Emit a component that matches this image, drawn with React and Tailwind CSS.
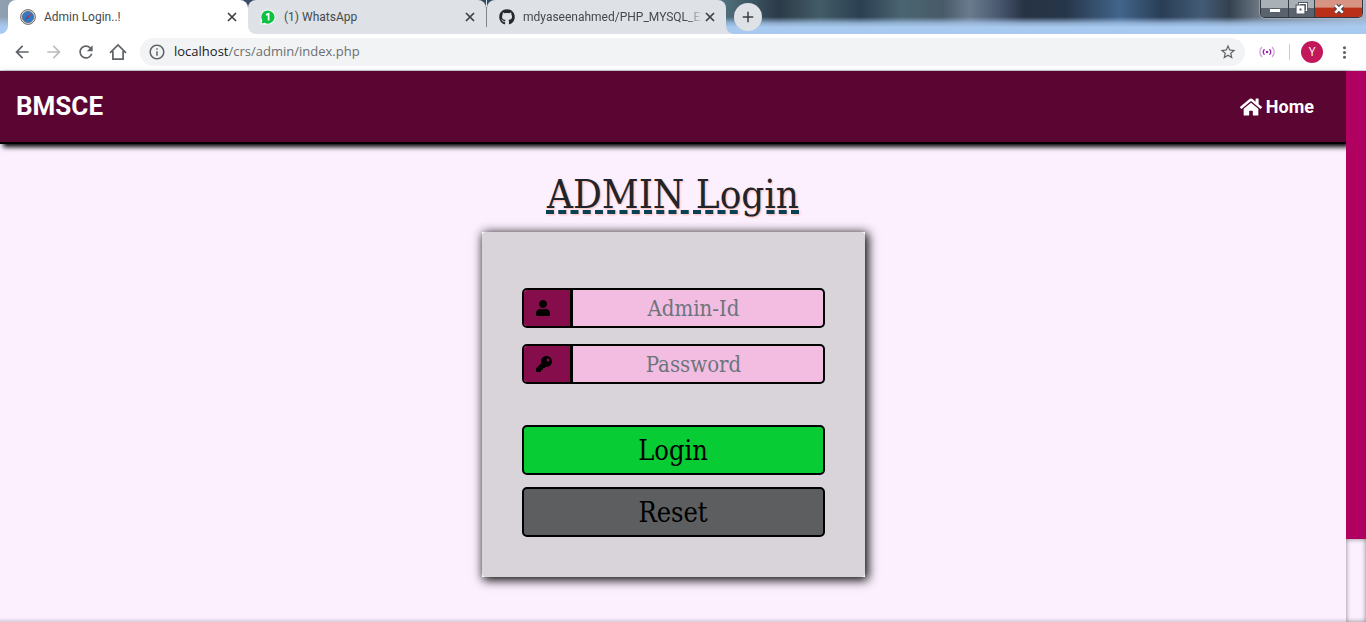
import React from "react";
import { FaUser, FaKey, FaHome, FaGithub } from "react-icons/fa";
import { MdArrowBack, MdArrowForward, MdRefresh, MdStarBorder, MdInfoOutline, MdAdd, MdMoreVert } from "react-icons/md";

function CompassIcon() {
  return (
    <svg viewBox="0 0 16 16" className="size-4 shrink-0" aria-hidden="true">
      <circle cx="8" cy="8" r="7.4" fill="#d9d9d9" stroke="#6a6a6a" strokeWidth="1" />
      <circle cx="8" cy="8" r="5.6" fill="#2f78cc" stroke="#5c6670" strokeWidth="0.8" />
      <path d="M11.5 4.5L8.8 8.8 7.2 7.2z" fill="#d8302c" />
      <path d="M4.5 11.5L7.2 7.2l1.6 1.6z" fill="#5b4a7a" />
    </svg>
  );
}

function ChatIcon() {
  return (
    <svg viewBox="0 0 16 16" className="size-4 shrink-0" aria-hidden="true">
      <path d="M8 .5A7.5 7.5 0 0 1 8 15.5H.7V8A7.4 7.4 0 0 1 8 .5z" fill="#fff" />
      <path d="M8 1.4a6.6 6.6 0 1 1-3.2 12.4L1.6 14.4l.7-3A6.6 6.6 0 0 1 8 1.4z" fill="#0bc142" />
      <path d="M6 5.9L8.6 4.8v6.6" fill="none" stroke="#fff" strokeWidth="1.7" />
    </svg>
  );
}

function Tab({ icon, title, active, width, fade }) {
  return (
    <div className={`flex h-[34px] min-w-0 items-center rounded-t-lg pr-[10px] pl-3 ${width} ${active ? "bg-white" : "bg-[#dee1e6]"}`}>
      {icon}
      <span className={`-mr-1 ml-2 min-w-0 flex-1 overflow-hidden font-['Roboto',sans-serif] text-xs whitespace-nowrap text-[#45494d] ${fade ? "[mask-image:linear-gradient(to_right,black_88%,transparent_97%)]" : ""}`}>{title}</span>
      <button aria-label="Close tab" className="flex size-3 shrink-0 items-center justify-center text-[#3c4043]">
        <svg viewBox="0 0 10 10" className="size-[10px]" fill="none" stroke="currentColor" strokeWidth="1.7"><path d="M1 1l8 8M9 1L1 9" /></svg>
      </button>
    </div>
  );
}

function WindowControls() {
  return (
    <div className="mr-[3px] ml-auto flex h-[18px] self-start overflow-hidden rounded-b-[5px] border border-t-0 border-[#30363f] shadow-[0_0_1px_1px_#c3ced980]">
      <button aria-label="Minimize" className="flex w-7 items-end justify-center border-r border-[#353d47] bg-linear-to-b from-[#a9b0b6] from-45% to-[#59626d] to-50% pb-1">
        <svg viewBox="0 0 12 5" className="h-[5px] w-3"><rect x=".5" y=".5" width="11" height="4" rx="1" fill="#fff" stroke="#555f69" /></svg>
      </button>
      <button aria-label="Restore" className="flex w-[26px] items-center justify-center border-r border-[#353d47] bg-linear-to-b from-[#a9b0b6] from-45% to-[#59626d] to-50%">
        <svg viewBox="0 0 13 13" className="size-[13px]">
          <path d="M4.5 1.5h7v7h-7z" fill="none" stroke="#505964" strokeWidth="3" />
          <path d="M4.5 1.5h7v7h-7z" fill="none" stroke="#fff" strokeWidth="1.2" />
          <path d="M2.5 4.5h6v6h-6z" fill="#505964" stroke="#505964" strokeWidth="4" />
          <path d="M2.5 4.5h6v6h-6z" fill="#fff" stroke="#fff" strokeWidth="1.8" />
          <path d="M4.5 6.5h2v2h-2z" fill="#505964" />
        </svg>
      </button>
      <button aria-label="Close" className="flex w-[47px] items-center justify-center bg-linear-to-b from-[#d89483] from-40% to-[#b92f17] to-50%">
        <svg viewBox="0 0 14 12" className="h-3 w-[14px]">
          <path d="M3.5 2.5l7 7m0-7l-7 7" stroke="#4c4654" strokeWidth="4.6" />
          <path d="M3.3 2.3l7.4 7.4m0-7.4L3.3 9.7" stroke="#fff" strokeWidth="2.5" />
        </svg>
      </button>
    </div>
  );
}

function TabStrip() {
  return (
    <div className="flex h-[34px] bg-[linear-gradient(to_bottom,transparent_50%,#a4c4eacc_68%,#a9caf0_80%),linear-gradient(to_right,#8fa0b0_0%,#3a4d68_18%,#354861_36%,#50707c_53%,#2b3a48_57%,#425c66_60%,#2b3f50_63%,#4b6572_66%,#475a67_69%,#6b7b8d_71%,#4b5a72_73%,#273343_75%,#26364a_78%,#42658b_82%,#293e56_85%,#445b76_88%,#33414f_90%,#67737f_92%,#a4b3c6_100%)]">
      <div className="flex w-2 shrink-0 items-end">
        <svg viewBox="0 0 8 8" className="size-2"><path d="M8 0v8H0a8 8 0 0 0 8-8z" fill="#fff" /></svg>
      </div>
      <Tab active width="w-[240px]" icon={<CompassIcon />} title="Admin Login..!" />
      <div className="relative">
        <svg viewBox="0 0 8 8" className="absolute bottom-0 left-0 z-10 size-2"><path d="M0 0v8h8a8 8 0 0 1-8-8z" fill="#fff" /></svg>
      </div>
      <Tab width="w-[238px]" icon={<ChatIcon />} title="(1) WhatsApp" />
      <div className="flex w-px items-center bg-[#dee1e6]"><div className="h-5 w-px bg-[#80868b]" /></div>
      <Tab fade width="w-[239px]" icon={<FaGithub className="size-4 shrink-0 text-[#24292e]" />} title="mdyaseenahmed/PHP_MYSQL_EX" />
      <div className="flex w-2 shrink-0 items-end">
        <svg viewBox="0 0 8 8" className="size-2"><path d="M0 0v8h8a8 8 0 0 1-8-8z" fill="#dee1e6" /></svg>
      </div>
      <button aria-label="New tab" className="flex size-7 items-center justify-center self-center rounded-full bg-[#dee1e6] text-[#3c4043]">
        <MdAdd className="size-[18px]" />
      </button>
      <WindowControls />
    </div>
  );
}

function Toolbar() {
  return (
    <div className="flex h-[37px] items-center border-b border-[#cfd2d6] bg-white pr-3 pl-3 text-[#5f6368]">
      <div className="flex items-center gap-3">
        <button aria-label="Back"><MdArrowBack className="size-5" /></button>
        <button aria-label="Forward" className="text-[#babcbe]"><MdArrowForward className="size-5" /></button>
        <button aria-label="Reload"><MdRefresh className="size-5" /></button>
        <button aria-label="Home page">
          <svg viewBox="0 0 20 20" className="size-5" fill="none" stroke="currentColor" strokeWidth="1.7"><path d="M2 10.9L10 3l8 7.9M4.9 9v8.1h10.2V9" /></svg>
        </button>
      </div>
      <div className="ml-3 flex h-7 flex-1 items-center rounded-full bg-[#f1f3f4] px-2">
        <MdInfoOutline className="size-[18px]" />
        <a href="#" className="ml-2 flex-1 text-[13px] text-[#6b6f73]"><span className="text-[#202124]">localhost</span>/crs/admin/index.php</a>
        <button aria-label="Bookmark this page"><MdStarBorder className="size-[18px]" /></button>
      </div>
      <button aria-label="Broadcast extension" className="ml-[14px]">
        <svg viewBox="0 0 16 12" className="h-3 w-4" fill="none" stroke="#9c27b0" strokeWidth="1.3">
          <circle cx="8" cy="6" r="1.3" fill="#9c27b0" stroke="none" />
          <path d="M5.5 3.2a4.2 4.2 0 0 0 0 5.6M10.5 3.2a4.2 4.2 0 0 1 0 5.6" />
          <path d="M3 1a7 7 0 0 0 0 10M13 1a7 7 0 0 1 0 10" stroke="#d49bdf" />
        </svg>
      </button>
      <div className="ml-[14px] h-4 w-px bg-[#c8cbce]" />
      <button aria-label="Profile" className="ml-[11px] flex size-[22px] items-center justify-center rounded-full bg-[#c2185b] text-xs text-white">Y</button>
      <button aria-label="Menu" className="ml-3"><MdMoreVert className="size-[19px]" /></button>
    </div>
  );
}

function Field({ id, label, type, icon }) {
  return (
    <div className="flex h-10 overflow-hidden rounded-[5px] border-2 border-black bg-[#f3bde1] text-black">
      <label htmlFor={id} aria-label={label} className="flex w-[49px] shrink-0 items-center border-r-[3px] border-black bg-[#850d4c] pl-3">{icon}</label>
      <input id={id} type={type} placeholder={label} className="min-w-0 flex-1 pr-2 text-center text-[22px] placeholder:text-[#6c757d] focus:outline-none" />
    </div>
  );
}

export default function App() {
  return (
    <div className="flex min-h-screen flex-col bg-[#fcf0ff] font-['Open_Sans',sans-serif]">
      <header>
        <TabStrip />
        <Toolbar />
      </header>
      <div className="flex flex-1">
        <div className="flex min-w-0 flex-1 flex-col">
          <nav className="flex h-[73px] items-center justify-between border-b-2 border-black bg-[#5a0532] pr-8 pl-4 font-['Roboto',sans-serif] text-white shadow-[3px_3px_5px_black]">
            <a href="#" className="text-[26px] font-bold">BMSCE</a>
            <a href="#" className="flex items-center gap-1 text-lg font-bold"><FaHome className="size-[22px]" />Home</a>
          </nav>
          <main className="flex flex-1 flex-col items-center px-4 pt-6 font-['DejaVu_Serif_Condensed','DejaVu_Serif',serif]">
            <h1 className="text-[40px] leading-[52px] text-[#212529] underline decoration-[#0b4253] decoration-dashed decoration-4 underline-offset-2 [text-shadow:1px_1px_2px_#ffb8b0]">ADMIN Login</h1>
            <form className="mt-3 w-full max-w-[383px] bg-white shadow-[2px_2px_10px_1px_black]">
              <div className="flex flex-col rounded-[4px] bg-[#d8d4d9] px-10 pt-14 pb-10">
                <div className="flex flex-col gap-4">
                  <Field id="admin-id" label="Admin-Id" type="text" icon={<FaUser className="h-4 w-[14px]" />} />
                  <Field id="password" label="Password" type="password" icon={<FaKey className="size-4" />} />
                </div>
                <div className="mt-[41px] flex flex-col gap-3 text-[27px] text-black">
                  <button type="submit" className="h-[50px] rounded-[5px] border-2 border-black bg-[#07cc33] pt-0.5">Login</button>
                  <button type="reset" className="h-[50px] rounded-[5px] border-2 border-black bg-[#5c5e60] pt-0.5">Reset</button>
                </div>
              </div>
            </form>
          </main>
          <div className="h-1 bg-linear-to-b from-[#fcf0ff] to-[#d5cbd8]" />
        </div>
        <div className="z-10 flex w-5 shrink-0 flex-col bg-[#fcf0ff]" aria-hidden="true">
          <div className="flex-[85] bg-[#b00060]" />
          <div className="flex-[15] shadow-[inset_0_0_5px_#808080]" />
        </div>
      </div>
    </div>
  );
}
